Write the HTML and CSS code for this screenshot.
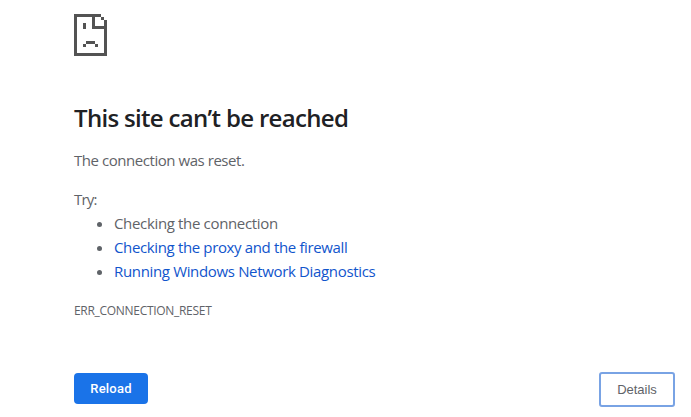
FILE: index.html
```html
<!DOCTYPE html>
<html lang="en">
<head>
<meta charset="utf-8">
<title>This site can’t be reached</title>
<link rel="stylesheet" href="styles.css">
</head>
<body>
<main class="page">
  <svg class="icon" viewBox="0 0 11 14" shape-rendering="crispEdges" aria-hidden="true">
    <path d="M0 0H9V1H10V2H11V14H0ZM1 1V13H10V5H6V1ZM7 1V4H10V2H9V1Z" fill-rule="evenodd"/>
    <path d="M3 3H4V5H3ZM4 9H7V10H4ZM3 10H4V11H3ZM7 10H8V11H7Z"/>
  </svg>
  <h1>This site can’t be reached</h1>
  <p class="summary">The connection was reset.</p>
  <p class="try">Try:</p>
  <ul>
    <li>Checking the connection</li>
    <li><a class="proxy">Checking the proxy and the firewall</a></li>
    <li><a>Running Windows Network Diagnostics</a></li>
  </ul>
  <p class="code">ERR_CONNECTION_RESET</p>
  <div class="buttons">
    <button class="reload">Reload</button>
    <button class="details">Details</button>
  </div>
</main>
</body>
</html>
```
FILE: styles.css
```css
* { box-sizing: border-box; }
body {
  margin: 0;
  background: #fff;
  color: #5f6368;
  font: 15px/24px "Open Sans", "Noto Sans", sans-serif;
  overflow: hidden;
}
.page { width: 601px; margin-left: 74px; padding-top: 14px; }
.icon { display: block; width: 33px; height: 42px; fill: #535353; }
h1 {
  margin: 47px 0 0;
  color: #202124;
  font-size: 24px;
  font-weight: 600;
  line-height: 30px;
  letter-spacing: -0.68px;
  white-space: nowrap;
}
p { margin: 0; white-space: nowrap; }
.summary { margin-top: 15px; letter-spacing: -0.45px; }
.try { margin-top: 15px; letter-spacing: -0.8px; }
ul { margin: 0; padding-left: 40px; letter-spacing: -0.34px; white-space: nowrap; }
a { color: #1155cc; }
.proxy { letter-spacing: -0.36px; }
.code { margin-top: 16px; font-size: 12px; letter-spacing: -0.3px; }
.buttons { display: flex; justify-content: space-between; align-items: flex-start; margin-top: 49px; }
button {
  padding: 0;
  font: 13px/16px "Liberation Sans", Arial, sans-serif;
  border-radius: 4px;
}
.reload { width: 74px; height: 31px; margin-top: 1px; border: 0; background: #1a73e8; color: #fff; font-family: Roboto, sans-serif; font-weight: 500; letter-spacing: 0.2px; }
.details { width: 76px; height: 35px; border: 2px solid #79a3e4; background: #fff; color: #5f6368; border-radius: 3px; }
```
